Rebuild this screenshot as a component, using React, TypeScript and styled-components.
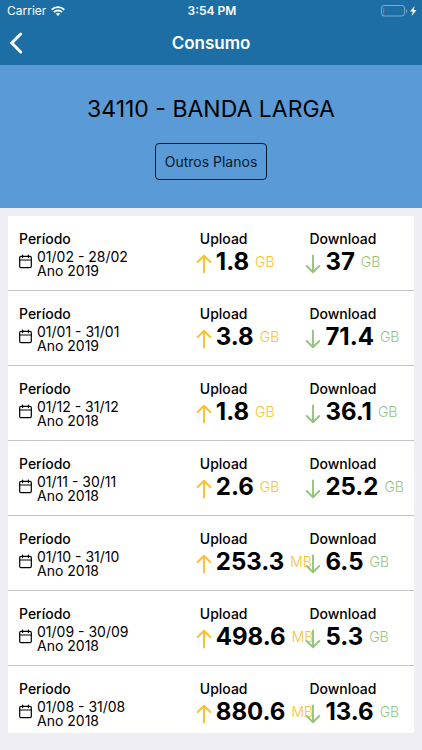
import React from 'react';
import styled, { createGlobalStyle } from 'styled-components';

const GlobalStyle = createGlobalStyle`
  *, *::before, *::after { box-sizing: border-box; }
  body {
    margin: 0;
    background: #eeeef4;
    color: #000;
    font-family: Inter, 'Liberation Sans', sans-serif;
  }
`;

const Header = styled.header`
  background: #1c6ea4;
  color: #fff;
`;

const StatusBar = styled.div`
  display: grid;
  grid-template-columns: 1fr auto 1fr;
  align-items: center;
  height: 22px;
  padding: 0 5px 0 7px;
  font-size: 12px;
  line-height: 16px;
`;

const StatusGroup = styled.div<{ $end?: boolean }>`
  display: flex;
  align-items: center;
  justify-content: ${(p) => (p.$end ? 'flex-end' : 'flex-start')};
  gap: 5px;
`;

const Clock = styled.time`
  font-weight: 600;
`;

const NavBar = styled.nav`
  display: grid;
  grid-template-columns: 1fr auto 1fr;
  align-items: center;
  height: 43px;
  padding: 0 8px 2px;
`;

const BackButton = styled.button`
  display: flex;
  justify-self: start;
  padding: 0;
  border: 0;
  background: none;
  color: inherit;
  cursor: pointer;
`;

const Title = styled.h1`
  margin: 0;
  font-size: 17px;
  font-weight: 600;
  line-height: 22px;
`;

const Plan = styled.section`
  display: flex;
  flex-direction: column;
  align-items: center;
  gap: 18px;
  padding: 28px 16px;
  background: #5a9bd7;
`;

const PlanName = styled.h2`
  margin: 0;
  font-size: 23px;
  font-weight: 400;
  line-height: 32px;
`;

const PlanButton = styled.button`
  height: 37px;
  padding: 0 9px;
  border: 1px solid #06192b;
  border-radius: 4px;
  background: none;
  color: #06192b;
  font-family: inherit;
  font-size: 14px;
  cursor: pointer;
`;

const List = styled.ul`
  margin: 8px 8px 16px;
  padding: 0;
  background: #fff;
  list-style: none;
`;

const Row = styled.li`
  display: grid;
  grid-template-columns: minmax(0, 1fr) 27% 27%;
  padding: 14px 0 12px;
  border-bottom: 1px solid #c4c4c6;

  &:last-child {
    padding-bottom: 5px;
    border-bottom: 0;
  }
`;

const Label = styled.h3<{ $indent: number }>`
  margin: 0;
  padding-left: ${(p) => p.$indent}px;
  font-size: 14px;
  font-weight: 500;
  line-height: 18px;
`;

const Period = styled.div`
  display: flex;
  align-items: flex-start;
  gap: 5px;
  padding: 2px 0 0 11px;

  svg { margin-top: 4px; }
`;

const Dates = styled.p`
  margin: 0;
  font-size: 14px;
  line-height: 14px;
`;

const Measure = styled.p<{ $color: string }>`
  display: flex;
  align-items: center;
  height: 28px;
  margin: 0;
  color: ${(p) => p.$color};
  white-space: nowrap;

  svg { flex: none; margin: 3px 3px 0 1px; }
`;

const Amount = styled.strong`
  margin: 0 6px 0 1px;
  color: #000;
  font-size: 24px;
  font-weight: 700;
  line-height: 28px;
`;

const Unit = styled.span`
  font-size: 14px;
  font-weight: 300;
  line-height: 18px;
`;

const WifiIcon = () => (
  <svg width="14" height="10" viewBox="0 0 14 10" fill="none" stroke="currentColor" strokeWidth="1.9" aria-hidden="true">
    <path d="M0.7 3.7C4.2 0.3 9.8 0.3 13.3 3.7" />
    <path d="M2.9 6.1C5.2 3.9 8.8 3.9 11.1 6.1" />
    <path d="M7 10L4.8 7.8C6 6.7 8 6.7 9.2 7.8Z" fill="currentColor" stroke="none" />
  </svg>
);

const BatteryIcon = () => (
  <svg width="36" height="12" viewBox="0 0 36 12" fill="none" aria-hidden="true">
    <rect x="0.5" y="0.5" width="23" height="10.5" rx="2.5" stroke="#7aabcd" />
    <path d="M25 4V8C26.4 7.4 26.4 4.6 25 4Z" fill="#7aabcd" />
    <rect x="2" y="2.5" width="1.3" height="7" rx="0.5" fill="#d9534f" />
    <path d="M33.6 1L29.1 6.5H31.8L30.6 11L35.6 5.1H32.7Z" fill="#fff" />
  </svg>
);

const BackIcon = () => (
  <svg width="16" height="22" viewBox="0 0 16 22" fill="none" stroke="currentColor" strokeWidth="3" aria-hidden="true">
    <path d="M12.7 2L3.8 11L12.7 20" strokeLinecap="round" />
  </svg>
);

const CalendarIcon = () => (
  <svg width="13" height="15" viewBox="0 0 13 15" fill="none" stroke="#000" strokeWidth="1.2" strokeLinecap="round" aria-hidden="true">
    <rect x="0.7" y="2.4" width="11.6" height="11.2" rx="1.3" />
    <path d="M0.7 6H12.3M3.6 1V3.6M9.4 1V3.6" />
  </svg>
);

const ArrowIcon = ({ down = false }: { down?: boolean }) => (
  <svg width="16" height="20" viewBox="0 0 16 20" fill="none" stroke="currentColor" strokeWidth="1.9" strokeLinecap="round" strokeLinejoin="round" aria-hidden="true">
    <path d={down ? 'M8 1.5V18M1.7 12L8 18.2L14.3 12' : 'M8 18.5V2M1.7 8L8 1.8L14.3 8'} />
  </svg>
);

interface Usage {
  dates: string;
  year: number;
  upload: [string, string];
  download: [string, string];
}

const usages: Usage[] = [
  { dates: '01/02 - 28/02', year: 2019, upload: ['1.8', 'GB'], download: ['37', 'GB'] },
  { dates: '01/01 - 31/01', year: 2019, upload: ['3.8', 'GB'], download: ['71.4', 'GB'] },
  { dates: '01/12 - 31/12', year: 2018, upload: ['1.8', 'GB'], download: ['36.1', 'GB'] },
  { dates: '01/11 - 30/11', year: 2018, upload: ['2.6', 'GB'], download: ['25.2', 'GB'] },
  { dates: '01/10 - 31/10', year: 2018, upload: ['253.3', 'MB'], download: ['6.5', 'GB'] },
  { dates: '01/09 - 30/09', year: 2018, upload: ['498.6', 'MB'], download: ['5.3', 'GB'] },
  { dates: '01/08 - 31/08', year: 2018, upload: ['880.6', 'MB'], download: ['13.6', 'GB'] },
];

const UsageRow = ({ usage }: { usage: Usage }) => (
  <Row>
    <div>
      <Label $indent={11}>Período</Label>
      <Period>
        <CalendarIcon />
        <Dates>
          {usage.dates}
          <br />
          {`Ano ${usage.year}`}
        </Dates>
      </Period>
    </div>
    <div>
      <Label $indent={5}>Upload</Label>
      <Measure $color="#fbc02d">
        <ArrowIcon />
        <Amount>{usage.upload[0]}</Amount>
        <Unit>{usage.upload[1]}</Unit>
      </Measure>
    </div>
    <div>
      <Label $indent={5}>Download</Label>
      <Measure $color="#93c47d">
        <ArrowIcon down />
        <Amount>{usage.download[0]}</Amount>
        <Unit>{usage.download[1]}</Unit>
      </Measure>
    </div>
  </Row>
);

export default function App() {
  return (
    <>
      <GlobalStyle />
      <Header>
        <StatusBar>
          <StatusGroup>
            <span>Carrier</span>
            <WifiIcon />
          </StatusGroup>
          <Clock>3:54 PM</Clock>
          <StatusGroup $end>
            <BatteryIcon />
          </StatusGroup>
        </StatusBar>
        <NavBar>
          <BackButton type="button" aria-label="Voltar">
            <BackIcon />
          </BackButton>
          <Title>Consumo</Title>
        </NavBar>
      </Header>
      <main>
        <Plan>
          <PlanName>34110 - BANDA LARGA</PlanName>
          <PlanButton type="button">Outros Planos</PlanButton>
        </Plan>
        <List>
          {usages.map((usage) => (
            <UsageRow key={usage.dates} usage={usage} />
          ))}
        </List>
      </main>
    </>
  );
}
